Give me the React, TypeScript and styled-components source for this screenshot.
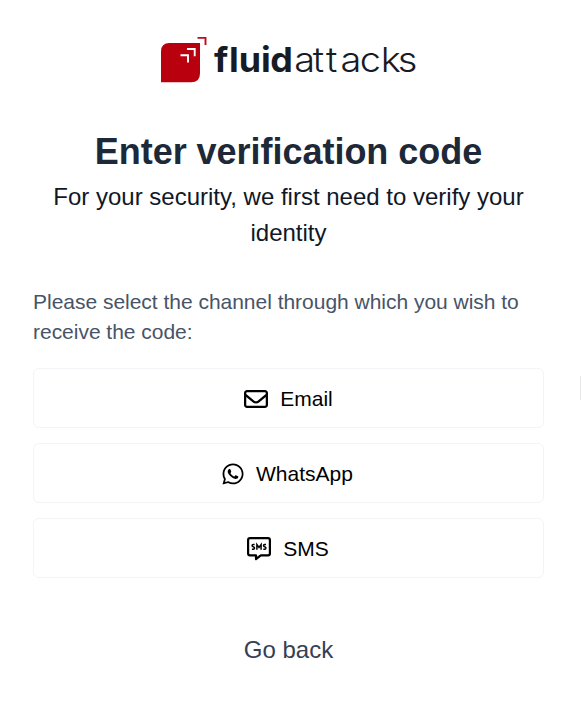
import React from "react";
import styled, { createGlobalStyle } from "styled-components";
import { FaRegEnvelope, FaWhatsapp } from "react-icons/fa6";

const GlobalStyle = createGlobalStyle`
  *, *::before, *::after { box-sizing: border-box; }
  body { margin: 0; background: #fff; font-family: "Liberation Sans", Arial, sans-serif; }
`;

const Page = styled.main`
  position: relative;
  height: 707px;
  padding: 36px 37px 0 33px;
  display: flex;
  flex-direction: column;
  overflow: hidden;
  background: #fff;
`;

const LogoSvg = styled.svg`
  display: block;
  align-self: center;
  width: 258px;
  height: 48px;
  flex: none;
`;

const Title = styled.h1`
  margin: 41px 0 0;
  font-size: 36px;
  line-height: 54px;
  font-weight: 700;
  text-align: center;
  white-space: nowrap;
  letter-spacing: -0.03px;
  color: #1d2939;
`;

const Subtitle = styled.p`
  margin: 0;
  font-size: 24px;
  line-height: 36px;
  text-align: center;
  color: #101828;
`;

const Instruction = styled.p`
  margin: 36px 0 21px;
  font-size: 21px;
  line-height: 30px;
  letter-spacing: -0.02px;
  color: #475467;
`;

const Channels = styled.div`
  display: flex;
  flex-direction: column;
  gap: 15px;
`;

const ChannelButton = styled.button<{ $gap?: number; $shift?: number }>`
  display: flex;
  align-items: center;
  justify-content: center;
  gap: ${({ $gap = 12 }) => $gap}px;
  height: 60px;
  padding: 2px ${({ $shift = 0 }) => $shift}px 0 0;
  border: 1px solid #f2f4f7;
  border-radius: 6px;
  background: #fff;
  color: #000;
  font: 21px/30px "Liberation Sans", Arial, sans-serif;

  svg { display: block; flex: none; }
`;

const BackLink = styled.button`
  align-self: center;
  margin-top: 54px;
  padding: 0;
  border: 0;
  background: none;
  color: #344054;
  font: 24px/36px "Liberation Sans", Arial, sans-serif;
`;

const EdgeHandle = styled.span`
  position: absolute;
  right: 0;
  top: 376px;
  width: 1px;
  height: 24px;
  background: #e8e8e8;
`;

const Logo = () => (
  <LogoSvg viewBox="160 36 258 48" role="img" aria-label="fluidattacks">
    <path d="M169.500 43H200V73.500Q200 82.300 191 82.300H161V51.500Q161 43 169.500 43Z" fill="#b8000f" />
    <path d="M197.500 37.900H205.500V45" fill="none" stroke="#bf0b1a" strokeWidth="1.900" />
    <path d="M187 49H194.700V56.300M180.500 55.200H188V62.500" fill="none" stroke="#fff" strokeWidth="1.900" />
    <g fill="#161b25" fontFamily="Inter, sans-serif" fontSize="34.500">
      <text y="72.500" transform="translate(214 0) scale(1.04 1)" x="0 14.500 23.800 45.300 54.000" fontWeight="700">fluid</text>
      <text y="72.500" transform="translate(294 0) scale(1.1 1)" x="0.300 17.100 29.000 42.200 59.800 78.800 94.400" fontWeight="260">attacks</text>
    </g>
  </LogoSvg>
);

const SmsIcon = () => (
  <svg width="24" height="24" viewBox="0 0 24 24" fill="none" stroke="currentColor">
    <path d="M3 1.100H21Q22.900 1.100 22.900 3V16.500Q22.900 18.400 21 18.400H13.800L9 22V18.400H3Q1.100 18.400 1.100 16.500V3Q1.100 1.100 3 1.100Z" strokeWidth="2.200" strokeLinejoin="round" />
    <path d="M7.600 7.500H6.200Q5.100 7.500 5.100 8.500Q5.100 9.300 6.200 9.700Q7.500 10.100 7.500 11Q7.500 12.200 6.300 12.200H4.900M9.900 12.800V7.600L12 10.500L14.100 7.600V12.800M19 7.500H17.600Q16.500 7.500 16.500 8.500Q16.500 9.300 17.600 9.700Q18.900 10.100 18.900 11Q18.900 12.200 17.700 12.200H16.300" strokeWidth="1.500" />
  </svg>
);

export default function App() {
  return (
    <>
      <GlobalStyle />
      <Page>
        <Logo />
        <Title>Enter verification code</Title>
        <Subtitle>For your security, we first need to verify your identity</Subtitle>
        <Instruction>Please select the channel through which you wish to receive the code:</Instruction>
        <Channels>
          <ChannelButton><FaRegEnvelope size={24} />Email</ChannelButton>
          <ChannelButton $gap={11} $shift={3}><FaWhatsapp size={24} />WhatsApp</ChannelButton>
          <ChannelButton $shift={1}><SmsIcon />SMS</ChannelButton>
        </Channels>
        <BackLink>Go back</BackLink>
        <EdgeHandle />
      </Page>
    </>
  );
}
